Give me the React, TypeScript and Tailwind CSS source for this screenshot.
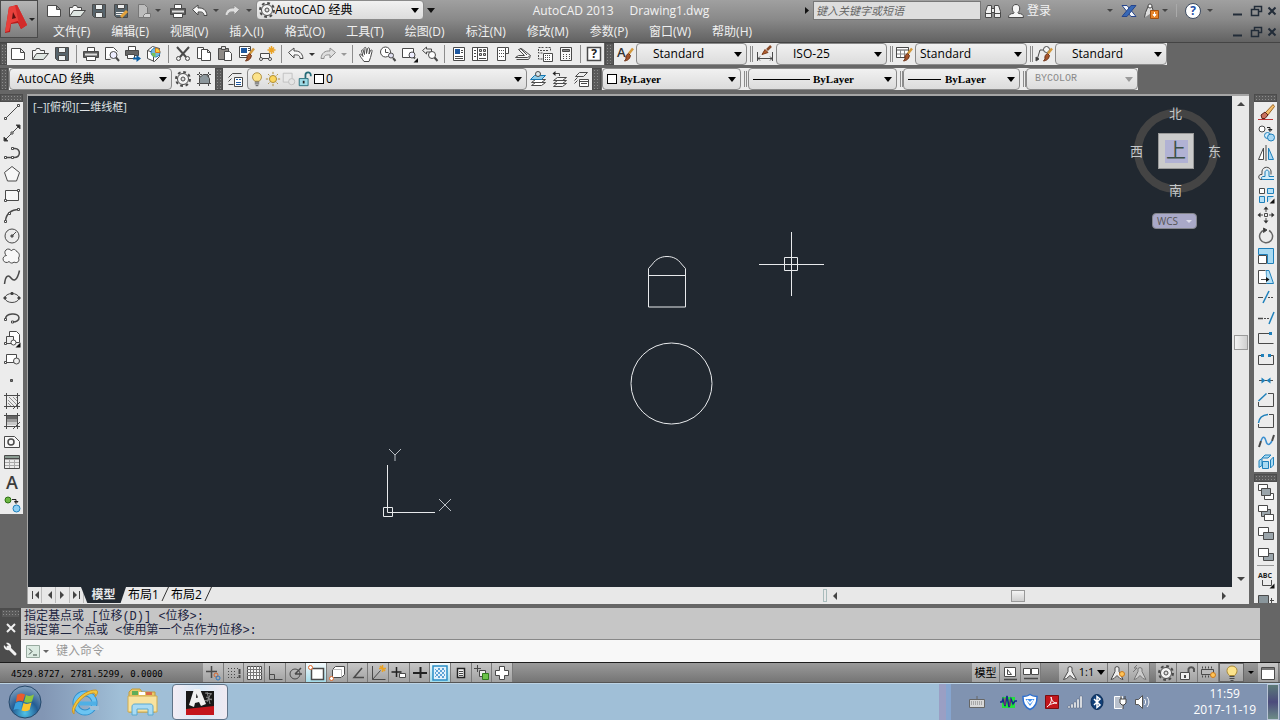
import React from "react";

type Kids = { children?: React.ReactNode };

// Base for all the 18px line icons
const Ico = ({ children, size = 18 }: Kids & { size?: number }) => (
  <svg
    width={size}
    height={size}
    viewBox="0 0 18 18"
    fill="none"
    stroke="#4a4a4a"
    strokeWidth="1"
    className="shrink-0 overflow-visible"
    aria-hidden="true"
  >
    {children}
  </svg>
);

const Gear = () => (
  <>
    <circle cx="9" cy="9" r="7" strokeWidth="2" strokeDasharray="2.8 2.7" />
    <circle cx="9" cy="9" r="5.5" fill="#f4f4f4" />
    <circle cx="9" cy="9" r="2" fill="#ddd" />
  </>
);

const Brush = () => (
  <>
    <path d="M17 3.500l-4 5" stroke="#d39a3e" strokeWidth="2.500" />
    <path d="M12.500 8.500l2 2c-1 4-3 5-6 5.500l1.500-2c-.5-3 .5-4.500 2.500-5.500z" fill="#a5542c" stroke="#6d3216" />
  </>
);

const Bulb = () => (
  <>
    <path d="M6.500 11.500C4.500 9.500 4 8.500 4 6.500a5 4.500 0 0110 0c0 2-.5 3-2.500 5z" fill="#fce38b" stroke="#a9893a" />
    <path d="M6.500 12.500h5M6.500 14.500h5M7.500 16.500h3" />
  </>
);

const Stack = () => <path d="M2.500 13.500l4-3h9l-4 3zM2.500 10.500l4-3h9l-4 3zM2.500 16.500l4-3h9l-4 3z" fill="#f5f5f5" />;

const icons: Record<string, React.ReactNode> = {
  new: <path d="M2.500 3.500h9l4 4v7h-13zM11.500 3.500v4h4" fill="#fff" />,
  open: (
    <>
      <path d="M1.500 14.500v-9h3l1-2h3l1 2h4v3" fill="#f5f5f5" />
      <path d="M1.500 14.500l4-6h12l-5 6z" fill="#dfe6e2" />
    </>
  ),
  save: (
    <>
      <path d="M2.500 2.500h13v13h-11l-2-2z" fill="#56646c" />
      <path d="M5.500 2.500h7v5h-7zM5.500 10.500h7v5h-7z" fill="#eef2f2" />
    </>
  ),
  saveAs: (
    <>
      <path d="M2.500 2.500h13v13h-11l-2-2z" fill="#56646c" />
      <path d="M5.500 2.500h7v4h-7z" fill="#eee" />
      <path d="M4 10.500h8M4 12.500h6" stroke="#eee" />
      <path d="M9 15l6-6" stroke="#e2a23c" strokeWidth="3" />
    </>
  ),
  sheetOff: (
    <>
      <path d="M3.500 2.500h6l3 3v10h-9z" fill="#bcbcbc" stroke="#777" />
      <path d="M10.500 11.500h5v4h-7v-2z" fill="#d0d0d0" stroke="#777" />
    </>
  ),
  print: (
    <>
      <path d="M5.500 6.500v-4h7v4" fill="#fff" />
      <path d="M1.500 6.500h15v6h-15z" fill="#5b5b5b" />
      <path d="M3 9.500h12" stroke="#ddd" strokeWidth="2" />
      <path d="M4.500 11.500h9v4h-9z" fill="#fff" />
    </>
  ),
  preview: (
    <>
      <path d="M2.500 14.500v-12h8l4 4M2.500 14.500h5" fill="#fff" />
      <circle cx="10.500" cy="10" r="3.500" fill="#eef" />
      <path d="M13 12.500l3 3.500" strokeWidth="2" />
    </>
  ),
  publish: (
    <>
      <path d="M4.500 5.500v-4h7v4" fill="#fff" />
      <path d="M1.500 5.500h13v5h-13z" fill="#666" />
      <path d="M3.500 9.500h7v4h-7z" fill="#fff" />
      <path d="M9 13.500h5" stroke="#0b5fa5" strokeWidth="2" />
      <path d="M12.500 10l4.500 3.500-4.500 3.500z" stroke="none" fill="#0b5fa5" />
    </>
  ),
  dwf: (
    <>
      <path d="M2.500 5.500l5-4 7 2v8l-5 5-7-3z" fill="#fff" />
      <path d="M2.500 5.500l6 2v9M8.500 7.500l6-4" />
      <circle cx="10.500" cy="7.500" r="4.500" fill="#74b9e0" stroke="#2a7fb8" />
      <path d="M10.500 3v4.500h4.500a4.500 4.500 0 00-4.500-4.500z" fill="#f4d13c" stroke="#d97a20" />
      <path d="M6.500 8h4v4a4 4 0 01-4-4z" fill="#7ac25a" stroke="none" />
    </>
  ),
  cut: (
    <>
      <path d="M3 2l9 10M15 2L6 12" strokeWidth="2" />
      <circle cx="4.500" cy="13.500" r="2" />
      <circle cx="13.500" cy="13.500" r="2" />
    </>
  ),
  copy: (
    <>
      <path d="M2.500 2.500h6v11h-6z" fill="#fff" />
      <path d="M6.500 4.500h6l3 3v8h-9zM12.500 4.500v3h3" fill="#fff" />
    </>
  ),
  paste: (
    <>
      <path d="M2.500 3.500h10v11h-10z" fill="#8e8a86" />
      <path d="M5.500 1.500h4v3h-4z" fill="#ddd" />
      <path d="M8.500 6.500h5l2 2v7h-7z" fill="#fff" />
    </>
  ),
  match: (
    <>
      <path d="M2.500 1.500h11v11h-11z" fill="#fff" />
      <path d="M4 3h6v5H4z" fill="#1c57a0" stroke="none" />
      <path d="M11 3.500h2M11 5.500h2M4 10.500h6" />
      <Brush />
    </>
  ),
  block: (
    <>
      <path d="M2.500 8.500h9v5h-9z" fill="#f4f4f4" />
      <circle cx="3" cy="14" r="1.500" fill="#fff" />
      <circle cx="12" cy="14" r="1.500" fill="#fff" />
      <path d="M13.500 1v8M9.500 5h8M11 2.500l5 5M16 2.500l-5 5" stroke="#eaa224" strokeWidth="1.500" />
    </>
  ),
  undo: <path d="M1.500 7.500l5.500-4.500v3c5-.5 8.500 2 9 7.500h-3c0-3-2-4-6-3.500v3z" fill="#f6f6f6" />,
  redo: <path d="M16.500 7.500l-5.500-4.500v3c-5-.5-8.500 2-9 7.500h3c0-3 2-4 6-3.500v3z" fill="#dedede" stroke="#8e8e8e" />,
  pan: (
    <path
      d="M6 16.500c-2-3-4-5-4.500-7 1-1 2 0 3.500 2l-1.500-6c.5-1 1.500-1 2 .5l1 3.500-.5-6c.5-1.500 2-1.500 2 0l.5 5 1-5c.5-1 2-1 2 .5l-.5 5 1.500-3.500c1-1 2-.5 1.500 1l-1.500 6-1.500 4z"
      fill="#fff"
    />
  ),
  zoomRt: (
    <>
      <circle cx="6.500" cy="7" r="5" fill="#fff" />
      <path d="M6.500 4v3.500h3" />
      <circle cx="12" cy="10.500" r="2.500" fill="#dde" />
      <path d="M14 13l2.500 3" strokeWidth="2" />
    </>
  ),
  zoomWin: (
    <>
      <path d="M2.500 3.500h11v9h-11z" fill="#fff" />
      <circle cx="12" cy="10" r="3" fill="#eef" />
      <path d="M14 12.500l1 1" strokeWidth="2" />
      <path d="M18 13v4.500h-4.500z" fill="#111" stroke="none" />
    </>
  ),
  zoomPrev: (
    <>
      <path d="M1.500 5.500l4-3.500v2h5v3h-5v2z" fill="#eee" />
      <circle cx="11" cy="10" r="3.500" fill="#fff" />
      <path d="M13.500 12.500l3 3.500" strokeWidth="2" />
    </>
  ),
  props: (
    <>
      <path d="M3.500 2.500h11v13h-11z" fill="#fff" />
      <path d="M5 4h5v5H5z" fill="#1c57a0" stroke="none" />
      <path d="M11 5.500h2M11 7.500h2M5 11.500h8M5 13.500h8" />
    </>
  ),
  design: (
    <>
      <path d="M1.500 2.500h15v13h-15zM6.500 2.500v13" fill="#fff" />
      <path d="M3 5.500h2M3 8.500h2M3 11.500h2" />
      <path d="M8.500 4.500h2v2h-2zM12.500 4.500h2v2h-2zM8.500 8.500h2v2h-2zM12.500 8.500h2v2h-2z" fill="#ccc" />
      <path d="M8 13.500h7" />
    </>
  ),
  palette: (
    <>
      <path d="M4.500 2.500h8v13h-8zM12.500 2.500h3v6h-3" fill="#fff" />
      <path d="M6 5.500h5M6 8.500h5M6 11.500h5" strokeDasharray="1 1" />
    </>
  ),
  sheets: (
    <>
      <path d="M1.500 12.500h12l3-2-9-7-3 1 6 6h-6z" fill="#f4f4f4" />
      <path d="M2.500 14.500h12l2-3M6 3l7 7" />
    </>
  ),
  markup: (
    <>
      <path d="M2.500 2.500h5M9.500 2.500h5v3M2.500 4v4h5M4 5.500h8M2.500 10v4h4" strokeDasharray="2 1" />
      <path d="M7.500 8.500h9v8h-9z" fill="#fff" />
      <path d="M9 10.500h6M9 12.500h6M9 14.500h6" strokeDasharray="1 1" />
    </>
  ),
  calc: (
    <>
      <path d="M3.500 2.500h11v13h-11z" fill="#f8f8f8" />
      <path d="M5.500 4.500h7v2h-7z" fill="#888" />
      <path d="M6 9.500h7M6 11.500h7M6 13.500h7" strokeDasharray="1 2" />
    </>
  ),
  help: (
    <>
      <path d="M2.500 2.500h13v13h-13z" fill="#fff" strokeWidth="1.500" />
      <text x="9" y="13" textAnchor="middle" fontSize="12" fontWeight="bold" fill="#222" stroke="none">?</text>
    </>
  ),
  textStyle: (
    <>
      <text x="1" y="12" fontSize="13" fontWeight="600" fill="#333" stroke="none">A</text>
      <Brush />
    </>
  ),
  dimStyle: (
    <>
      <path d="M1.500 7v9M16.500 7v9M1.500 13.500h15M4 11.500l-2 2 2 2M14 11.500l2 2-2 2" />
      <path d="M15 1l-4 4" stroke="#8a4b2a" strokeWidth="2.500" />
      <path d="M6 9.500l3-5 3 3z" fill="#b5602f" stroke="#7d3b19" />
    </>
  ),
  tableStyle: (
    <>
      <path d="M1.500 2.500h12v10h-12zM5.500 5.500v7M9.500 5.500v7M1.500 9h12" fill="#fff" stroke="#888" />
      <path d="M1.500 2.500h12v10h-12zM1.500 5h12" />
      <Brush />
    </>
  ),
  leaderStyle: (
    <>
      <path d="M2 15l3-10h4" />
      <path d="M1 12v4l3-2z" fill="#333" />
      <circle cx="11.500" cy="4.500" r="3" fill="#f5f5f5" />
      <Brush />
    </>
  ),
  gear: <Gear />,
  workspace: (
    <>
      <path d="M2 4.500h14M2 13.500h14M4.500 2v14M13.500 2v14" strokeDasharray="2 1" />
      <path d="M4.500 13.500v-6l4-3h3l3 4v5z" fill="#8d979c" />
    </>
  ),
  layerProps: (
    <>
      <path d="M2.500 7.500l4-4h9M2.500 11.500l3-3M2.500 14.500h5" />
      <path d="M8.500 7.500h8v9h-8z" fill="#fff" />
      <path d="M10 9.500h2M13 9.500h2M10 12.500h5M10 14.500h5" stroke="#1c57a0" />
    </>
  ),
  bulb: <Bulb />,
  sun: (
    <>
      <circle cx="9" cy="9" r="4" fill="#fbd65e" stroke="#a7842a" />
      <path d="M9 1v2.500M9 14.500v2.500M1 9h2.500M14.500 9h2.500M3.500 3.500l1.500 1.500M13 13l1.500 1.500M14.500 3.500L13 5M5 13l-1.500 1.500" stroke="#a7842a" />
    </>
  ),
  vpFreeze: (
    <>
      <path d="M2.500 2.500h10v10h-10z" fill="#e9e9e9" stroke="#bdbdbd" />
      <circle cx="12" cy="12" r="3.500" fill="#e4e4e4" stroke="#bdbdbd" />
    </>
  ),
  unlock: (
    <>
      <path d="M9.500 8V4.500a3 3 0 016 0V6" stroke="#246a78" strokeWidth="2" />
      <path d="M2.500 8.500h10v8h-10z" fill="#9edbe6" stroke="#246a78" />
      <path d="M7.500 11v3" stroke="#222" strokeWidth="2" />
    </>
  ),
  layerCurrent: (
    <>
      <path d="M2.500 12.500l4-3h10l-4 3zM2.500 15.500l4-3h10l-4 3z" fill="#fff" />
      <path d="M1.500 9.500l4-4h11l-4 4z" fill="#8fcdea" stroke="#1276b2" />
      <circle cx="9" cy="4" r="2.500" fill="#dbe8ec" />
    </>
  ),
  layerPrev: (
    <>
      <Stack />
      <path d="M3 3.500h5.500V6" />
      <path d="M4.500 1L1.500 3.500l3 2.500z" fill="#222" stroke="none" />
    </>
  ),
  layerState: (
    <>
      <path d="M3.500 6.500l4-4h8l-4 4zM2.500 10.500l3-3M2.500 13.500l3-3" fill="#eee" />
      <path d="M7.500 9.500h9v7h-9z" fill="#fff" />
      <path d="M7.500 11.500h9M9 13.500h6" />
    </>
  ),
  // draw
  line: (
    <>
      <path d="M3 15L15 3" />
      <path d="M1.500 14.500h2v2h-2zM14.500 1.500h2v2h-2z" fill="#fff" />
    </>
  ),
  xline: (
    <>
      <path d="M3 15L15 3" />
      <path d="M1 17v-4l4 4zM17 1v4l-4-4z" fill="#222" />
      <path d="M8 8h2v2h-2z" fill="#fff" />
    </>
  ),
  pline: (
    <>
      <path d="M2 13.500h9c7 0 7-9 1-9h-2" strokeWidth="1.500" />
      <path d="M1.500 12.500h2v2h-2zM8.500 12.500h2v2h-2zM8.500 3.500h2v2h-2z" fill="#fff" />
    </>
  ),
  polygon: <path d="M9 1.500l7.500 6-3 8.500h-9l-3-8.500z" fill="#f8f8f8" />,
  rect: (
    <>
      <path d="M2.500 4.500h13v10h-13z" fill="#f8f8f8" />
      <path d="M1.500 13.500h2v2h-2zM14.500 3.500h2v2h-2z" fill="#fff" />
    </>
  ),
  arc: (
    <>
      <path d="M2.500 15C3 8 8 3.500 16 3.500" strokeWidth="1.500" />
      <path d="M1.500 14.500h2v2h-2zM5.500 6.500h2v2h-2zM14.500 2.500h2v2h-2z" fill="#fff" />
    </>
  ),
  circle: (
    <>
      <circle cx="9" cy="9" r="7" />
      <path d="M9 9l4-4M8 8h2v2h-2z" fill="#777" />
    </>
  ),
  cloud: <path d="M8.500 4a3.500 3.500 0 10-5 4.500 3.500 3.500 0 102.500 6c1.500 2 4 2 5 .5 3 2 6-1 4.500-4 2-3 0-6-2-6.500-1-3-4.500-2.500-5-.500z" fill="#f8f8f8" />,
  spline: <path d="M1.500 16c1-9 4-9.500 6.500-6s6 3.500 8.500-7.500" strokeWidth="1.500" />,
  ellipse: (
    <>
      <ellipse cx="9" cy="9" rx="7" ry="4.500" />
      <path d="M1 8h2v2h-2zM15 8h2v2h-2zM8 3.500h2v2h-2z" fill="#333" />
    </>
  ),
  ellipseArc: (
    <>
      <path d="M2.500 10c0-6 13-7 13.500-1.500.3 3-3 4.500-6 4.500" strokeWidth="1.500" />
      <path d="M1.500 9.500h2v2h-2zM8.500 12h2v2h-2z" fill="#fff" />
    </>
  ),
  insert: (
    <>
      <path d="M6.500 1.500h7l3 3v8h-10z" fill="#fff" />
      <path d="M3.500 6.500h7v7h-7z" fill="#eee" />
      <circle cx="10.500" cy="12.500" r="2.500" fill="#fff" />
      <path d="M1.500 12.500h2v2h-2z" fill="#fff" />
      <path d="M17.500 12.500v5h-5z" fill="#111" stroke="none" />
    </>
  ),
  makeBlock: (
    <>
      <path d="M3.500 4.500h10v8h-10z" fill="#fff" />
      <circle cx="13.500" cy="11" r="3" fill="#eee" />
      <path d="M1.500 11.500h2v2h-2z" fill="#fff" />
    </>
  ),
  point: <path d="M7.500 8.500h2v2h-2z" fill="#777" />,
  hatch: (
    <>
      <path d="M5 8l6 6M5 11l3 3M6 5l8 8M10 5l4 4M13 5l1 1" stroke="#909090" />
      <path d="M1 3.500h16M1 14.500h16M3.500 1v16M14.500 1v16M17 10l-7 7" />
    </>
  ),
  gradient: (
    <>
      <path d="M4 4h10v3H4z" fill="#666" stroke="none" />
      <path d="M4 7h10v3H4z" fill="#999" stroke="none" />
      <path d="M4 10h10v3H4z" fill="#c8c8c8" stroke="none" />
      <path d="M1 3.500h16M1 14.500h16M3.500 1v16M14.500 1v16M17 10l-7 7" />
    </>
  ),
  region: (
    <>
      <path d="M1.500 3.500h10l5 5v6h-15z" fill="#f8f8f8" />
      <circle cx="8" cy="9" r="3" strokeWidth="1.500" />
    </>
  ),
  table: (
    <>
      <path d="M2 6.500h14M2 9.500h14M2 12.500h14M6.500 6v9M11.500 6v9" stroke="#aaa" />
      <path d="M2 3h14v2H2z" fill="#8b9c92" stroke="none" />
      <path d="M1.500 2.500h15v13h-15zM1.500 5.500h15" />
    </>
  ),
  mtext: <text x="9" y="15" textAnchor="middle" fontSize="18" fontWeight="600" fill="#3c3c3c" stroke="none">A</text>,
  addSel: (
    <>
      <circle cx="5" cy="5" r="3" fill="#6db742" stroke="#2f7216" />
      <circle cx="13.500" cy="13.500" r="3.500" fill="#8fd0f4" stroke="#1f80bb" />
      <path d="M9 4.500h4v3M11.500 6.500l1.500 2 2-2z" stroke="#222" fill="none" />
    </>
  ),
  // modify
  erase: (
    <>
      <path d="M1 16.500h15" stroke="#b33" />
      <path d="M8 10l8-8.500 1.500 2-7 9z" fill="#f4bd6c" stroke="#9a6520" />
      <path d="M4 12l4-3 3 3-3 3.500H5z" fill="#c9705c" stroke="#5c2218" />
    </>
  ),
  copyObj: (
    <>
      <circle cx="5" cy="5" r="3" fill="#fff" />
      <path d="M10 3.500h3v3M11.500 5.500l1.500 2 2-2z" stroke="#222" />
      <circle cx="10.500" cy="11.500" r="3" fill="#d5ecfa" stroke="#1f80bb" />
      <circle cx="14" cy="13.500" r="3.500" fill="#a9d8f4" stroke="#1f80bb" />
    </>
  ),
  mirror: (
    <>
      <path d="M6.500 4v11.500h-5z" fill="#fff" />
      <path d="M9 1v16" />
      <path d="M11.500 4v11.500h5z" fill="#a9d8f4" stroke="#1f80bb" />
    </>
  ),
  offset: (
    <>
      <path d="M5 9.500V6c1-5 8-5 9 0v3.500M5 9.500H4c-3 0-3 5 0 5h2" />
      <path d="M17 14.500H6c-2 0-2-3 0-3h2V7c.5-2.500 3.500-2.500 4 0v4.500h5" fill="#d4edf9" stroke="#1f80bb" />
    </>
  ),
  array: (
    <>
      <path d="M2.500 2.500h5v5h-5z" fill="#fff" />
      <path d="M10.500 2.500h6v5h-6zM2.500 10.500h5v6h-5zM10.500 16v-5.500h6" fill="#b8e0f5" stroke="#1f80bb" />
      <path d="M17.500 12.500v5h-5z" fill="#111" stroke="none" />
    </>
  ),
  move: (
    <>
      <path d="M9 2v4M9 12v4M2 9h4M12 9h4M7.500 7.500h3v3h-3z" />
      <path d="M9 .5l2.500 3h-5zM9 17.500l2.500-3h-5zM.5 9l3-2.500v5zM17.500 9l-3-2.500v5z" fill="#333" stroke="none" />
    </>
  ),
  rotate: (
    <>
      <path d="M7.500 3A6.500 6.500 0 1012 3.500" stroke="#666" strokeWidth="1.500" />
      <path d="M6.500 1l3.500 2-3.500 2.500z" fill="#333" />
    </>
  ),
  scale: (
    <>
      <path d="M1.500 1.500h15v15h-6v-9h-9z" fill="#a9daf2" stroke="#1f80bb" />
      <path d="M1.500 8.500h8v8h-8z" fill="#fff" />
    </>
  ),
  stretch: (
    <>
      <path d="M9 2.500h3l4.500 13H9z" fill="#b8e0f5" stroke="#1f80bb" />
      <path d="M8.500 2.500h-7v13h8" fill="#fff" />
      <path d="M4 11.500h6" />
      <path d="M9 9l3.500 2.500L9 14z" fill="#111" stroke="none" />
    </>
  ),
  trim: (
    <>
      <path d="M1 9.500h5" />
      <path d="M11 9.500h6" strokeDasharray="2 1" />
      <path d="M12 3L6 15" stroke="#1f80bb" strokeWidth="1.500" />
    </>
  ),
  extend: (
    <>
      <path d="M1 9.500h5" strokeWidth="1.500" />
      <path d="M7 9.500h5" strokeDasharray="2 1" />
      <path d="M17 3l-5 12" stroke="#1f80bb" strokeWidth="1.500" />
    </>
  ),
  breakPt: (
    <>
      <path d="M12 4.500H1.500v10h15" />
      <path d="M12 3h3v3h-3z" fill="#1f80bb" stroke="none" />
    </>
  ),
  breakObj: (
    <>
      <path d="M4 5.500H1.500v9h15v-9H14" />
      <path d="M4 4h3v3H4zM11 4h3v3h-3z" fill="#1f80bb" stroke="none" />
    </>
  ),
  join: (
    <>
      <path d="M2 9.500h14" />
      <path d="M4.500 6.500l4 3-4 3zM13.500 6.500l-4 3 4 3z" fill="#1f80bb" stroke="none" />
    </>
  ),
  chamfer: (
    <>
      <path d="M11 2.500h5.500v13h-15V11" />
      <path d="M1.500 10l8-7.500" stroke="#1f80bb" strokeWidth="1.500" />
    </>
  ),
  fillet: (
    <>
      <path d="M12 2.500h4.500v13h-15V12" />
      <path d="M1.500 11C2 6 6 3 11 2.500" stroke="#1f80bb" strokeWidth="1.500" />
    </>
  ),
  blend: (
    <>
      <path d="M2 15l2-6M17 3l-2 6" strokeWidth="2" />
      <path d="M4 9c2-6 4-4 5 0s3 5 6 0" stroke="#3b8fd0" strokeWidth="1.500" />
    </>
  ),
  explode: (
    <path
      d="M5.500 8.500h6v7h-6zM2 7.500l3-2v7l-3 2zM5 5l3-3h6l-3 3zM13.500 7l3-3v8l-3 3z"
      fill="#a9daf2"
      stroke="#1f80bb"
    />
  ),
  orderFront: (
    <>
      <path d="M1.500 1.500h9v6h-9zM7.500 10.500h9v6h-9z" fill="#fff" />
      <path d="M4.500 5.500h9v7h-9z" fill="#9ba5ab" />
    </>
  ),
  orderBack: (
    <>
      <path d="M4.500 5.500h9v7h-9z" fill="#9ba5ab" />
      <path d="M1.500 1.500h9v6h-9zM7.500 10.500h9v6h-9z" fill="#fff" />
    </>
  ),
  orderAbove: (
    <>
      <path d="M1.500 2.500h10v8h-10z" fill="#fff" />
      <path d="M6.500 7.500h10v7h-10z" fill="#9ba5ab" />
    </>
  ),
  orderUnder: (
    <>
      <path d="M6.500 7.500h10v7h-10z" fill="#9ba5ab" />
      <path d="M1.500 2.500h10v8h-10z" fill="#fff" />
    </>
  ),
  orderText: (
    <>
      <text x="1" y="7" fontSize="7" fontWeight="bold" fill="#222" stroke="none">ABC</text>
      <path d="M5.500 9v5.500h9V9" />
      <path d="M17.500 12.500v5h-5z" fill="#111" stroke="none" />
    </>
  ),
  orderHatch: (
    <>
      <path d="M1.500 3.500h10v10h-10z" fill="#8a969c" />
      <path d="M14.500 6v6M13 8.500h4M14.500 12.500h2" />
    </>
  ),
  // status bar toggles
  infer: (
    <>
      <path d="M7.500 2v12M2 7.500h11" strokeWidth="1.500" />
      <circle cx="12" cy="11" r="2" stroke="#d9672c" />
      <circle cx="14" cy="14" r="2" stroke="#2b78c2" />
    </>
  ),
  snap: (
    <>
      <path d="M3 4.500h10M3 7.500h8M3 10.500h8M3 13.500h10" strokeDasharray="1 2" />
      <path d="M14.500 5v9" strokeWidth="2" strokeDasharray="5 1" />
    </>
  ),
  grid: (
    <>
      <path d="M2.500 2.500h14v13h-14z" fill="#f6f6f6" />
      <path d="M5.500 2v14M8.500 2v14M11.500 2v14M14.500 2v14M2 5.500h15M2 8.500h15M2 11.500h15" stroke="#777" />
    </>
  ),
  ortho: <path d="M3.500 2v13.500h13M3.500 10.500h5v5" />,
  polar: (
    <>
      <circle cx="8" cy="10" r="5" />
      <path d="M8 10l6-6M8 10h7" strokeWidth="1.500" />
    </>
  ),
  osnap: (
    <>
      <path d="M4.500 4.500h12v11h-12z" fill="#fff" strokeWidth="1.500" />
      <circle cx="3.500" cy="3.500" r="2" fill="#fff" stroke="#e26a2c" />
    </>
  ),
  osnap3d: (
    <>
      <path d="M4.500 5.500l3-3h9v8l-3 3h-9z" fill="#fff" />
      <path d="M4.500 5.500h9v8" stroke="#bbb" />
      <circle cx="3.500" cy="14.500" r="2" fill="#fff" stroke="#e26a2c" />
    </>
  ),
  otrack: <path d="M13 4L5 13.500h10" strokeWidth="1.500" />,
  ducs: (
    <>
      <path d="M3.500 2v13.500h13M3.500 15.500l8-9" />
      <path d="M13.500 1v7M10 4.500h7M11 2l5 5" stroke="#eaa224" strokeWidth="1.500" />
    </>
  ),
  dyn: (
    <>
      <path d="M6.500 3v10M1.500 8h10" strokeWidth="1.500" stroke="#222" />
      <path d="M9.500 9.500h6v4h-6z" fill="#fff" />
    </>
  ),
  lwt: <path d="M2 9h14M9.500 3v11" strokeWidth="2" stroke="#222" />,
  tpy: (
    <>
      <path d="M2 2h14v14H2z" fill="#e3f2fb" stroke="#2a8fc6" strokeWidth="1.500" />
      <path d="M4 5l9 9M4 9l5 5M7 4l7 7M11 4l3 3M4 13L13 4M4 9l5-5M7 14l7-7M11 14l3-3" stroke="#5ea3d6" />
    </>
  ),
  qp: (
    <>
      <path d="M5.500 4.500h7v9h-7z" fill="#f5f5f5" strokeWidth="1.500" stroke="#222" />
      <path d="M7 7.500h4M7 9.500h4M7 11.500h4" />
    </>
  ),
  sc: (
    <>
      <path d="M4.500 1v7M1 4.500h7" />
      <path d="M6.500 6.500h6v6h-6z" fill="#eee" />
      <path d="M9.500 9.500h6v6h-6z" fill="#6cc24a" stroke="#2f7a1c" />
    </>
  ),
  am: <path d="M6.500 2.500h5v4h4v5h-4v4h-5v-4h-4v-5h4z" fill="#fff" />,
  paper: (
    <>
      <path d="M3.500 3.500h11v9h-11z" fill="#fff" />
      <path d="M6.500 5.500v5h4z" />
      <path d="M3 15.500h13" strokeWidth="1.500" />
    </>
  ),
  layouts: (
    <>
      <path d="M1.500 4.500h7v6h-7zM9.500 4.500h7v6h-7z" fill="#fff" />
      <path d="M2 14.500h14" strokeWidth="1.500" />
    </>
  ),
  annotate: <path d="M9 2.500l2 1v4l4.500 8-3-1-3.500-3-3.500 3-3 1 4.500-8v-4z" fill="#eee" />,
  annoVis: (
    <>
      <path d="M8 2.500l2 1v4l4 8-3-1-3-3-3 3-3 1 4-8v-4z" fill="#eee" />
      <circle cx="13" cy="10" r="2.500" fill="#ffc457" stroke="#cc7a1c" />
    </>
  ),
  annoAuto: (
    <>
      <path d="M10 3.500l2 1v3l4 8-3-1-3-3-3 3-3 1 4-8v-3z" fill="#ccc" stroke="#777" />
      <path d="M3 8l4-4H4l3-3" stroke="#777" />
    </>
  ),
  lockOpen: (
    <>
      <path d="M10.500 8V5a3 3 0 015.500 0v3" strokeWidth="2" stroke="#555" />
      <path d="M2.500 8.500h9v7h-9z" fill="#eee" />
      <path d="M7 11v3" strokeWidth="2" />
    </>
  ),
  hardware: (
    <>
      <path d="M2.500 5.500h12v5h-12z" fill="#bbb" />
      <path d="M3 3.500h12M3 12.500h8" strokeDasharray="1 2" strokeWidth="2" />
      <circle cx="14" cy="11" r="2.500" fill="#ffc457" stroke="#cc7a1c" />
    </>
  ),
  clean: (
    <>
      <path d="M2.500 3.500h13v12h-13z" fill="#fff" />
      <path d="M3 5h12" strokeWidth="2" stroke="#777" />
    </>
  ),
  // title bar
  binoculars: (
    <path
      d="M1.500 15.500v-6l2-6h4v12zM16.500 15.500v-6l-2-6h-4v12zM7.500 6.500h3v4h-3M1.500 11.500h6M10.500 11.500h6"
      fill="#efefef"
    />
  ),
  user: (
    <path d="M1.500 15.500c0-3 2-4 5-4l.5-1c-2.500-2-2.500-8 2-8s4.500 6 2 8l.5 1c3 0 5 1 5 4z" fill="#f4f4f4" />
  ),
  exchange: (
    <>
      <path d="M2 3.500h5l9 11h-5z" fill="#f2f5fa" stroke="#26458c" />
      <path d="M16 3.500h-5L2 14.500h5z" fill="#3768b5" stroke="#26458c" />
    </>
  ),
  a360: (
    <>
      <path d="M2.500 15.500l1-5 3-7h3l2 6" fill="#ddd" />
      <circle cx="8" cy="4" r="2" fill="#fff" />
      <path d="M8.500 8.500h8v8h-8z" fill="#e8852a" stroke="#a1500f" />
      <path d="M12.500 10v3M11 12.500l1.500 2 1.500-2z" stroke="#fff" fill="#fff" />
    </>
  ),
  helpRound: (
    <>
      <circle cx="9" cy="9" r="7.500" fill="#fff" stroke="#3c4a60" />
      <text x="9" y="13" textAnchor="middle" fontSize="12" fontWeight="bold" fill="#1f4fa8" stroke="none">?</text>
    </>
  ),
};

const IconButton = ({ name, className = "" }: { name: string; className?: string }) => (
  <button aria-label={name} className={`flex items-center justify-center min-w-0 ${className}`}>
    <Ico>{icons[name]}</Ico>
  </button>
);

const Caret = ({ className = "" }: { className?: string }) => (
  <svg width="8" height="5" viewBox="0 0 8 5" className={`shrink-0 ${className}`} aria-hidden="true">
    <path d="M0 0h8L4 5z" fill="currentColor" />
  </svg>
);

const SmallCaret = ({ className = "" }: { className?: string }) => (
  <svg width="6" height="3" viewBox="0 0 6 3" className={`shrink-0 ${className}`} aria-hidden="true">
    <path d="M0 0h6L3 3z" fill="currentColor" />
  </svg>
);

const Sep = () => (
  <span className="flex w-[7px] shrink-0 justify-center">
    <span className="my-[2px] w-px bg-[#8c8c8c]" />
  </span>
);

// Dotted drag handle of a toolbar
const Grip = ({ className = "" }: { className?: string }) => (
  <div
    className={`shrink-0 border border-[#4c4c4c] bg-[#5a5a5a] bg-[radial-gradient(#8c8c8c_1px,transparent_1px)] bg-[size:3px_3px] ${className}`}
  />
);

// A run of icon buttons that share a width
const IconRun = ({ names, className }: { names: string[]; className: string }) => (
  <div className={`flex shrink-0 ${className}`}>
    {names.map((name) => (
      <IconButton key={name} name={name} className="flex-1" />
    ))}
  </div>
);

type DropProps = Kids & {
  label: string;
  value: string;
  className: string;
  textClass: string;
  disabled?: boolean;
};

const Drop = ({ label, value, className, textClass, disabled, children }: DropProps) => (
  <div
    className={`relative flex shrink-0 items-center rounded-sm border border-[#8a8a8a] bg-linear-to-b from-[#f1f1f1] to-[#dcdcdc] ${className}`}
  >
    <select
      aria-label={label}
      disabled={disabled}
      className={`w-full appearance-none truncate ${disabled ? "text-[#8a8a8a] opacity-100" : "text-black"} ${textClass}`}
    >
      <option>{value}</option>
    </select>
    {children && <span className="pointer-events-none absolute inset-y-0 left-1 flex items-center">{children}</span>}
    <Caret
      className={`pointer-events-none absolute top-1/2 right-1 -mt-[2px] ${disabled ? "text-[#9a9a9a]" : "text-black"}`}
    />
  </div>
);

// Light strip with a double rule, sits between two drop-downs
const Joint = ({ icon, className }: { icon?: string; className: string }) => (
  <div className={`flex shrink-0 items-center bg-[#ececec] pl-[3px] ${className}`}>
    <span className="h-4 w-[3px] shrink-0 border-x border-[#8c8c8c]" />
    {icon && <IconButton name={icon} className="flex-1" />}
  </div>
);

const WindowButtons = () => (
  <div className="flex items-center gap-[2px] pr-[2px]">
    <button aria-label="最小化" className="w-4">
      <svg width="16" height="12" viewBox="0 0 16 12">
        <path d="M3 9.500h9" stroke="#222c38" strokeWidth="2" />
      </svg>
    </button>
    <button aria-label="还原" className="w-4">
      <svg width="16" height="12" viewBox="0 0 16 12" fill="none" stroke="#222c38">
        <path d="M6.500 4V1.500h7v5H11M3.500 4.500h7v6h-7z" strokeWidth="1.500" />
      </svg>
    </button>
    <button aria-label="关闭" className="w-3">
      <svg width="12" height="12" viewBox="0 0 12 12">
        <path d="M2.500 2.500l7 7M9.500 2.500l-7 7" stroke="#222c38" strokeWidth="2" />
      </svg>
    </button>
  </div>
);

const menus = [
  "文件(F)", "编辑(E)", "视图(V)", "插入(I)", "格式(O)", "工具(T)",
  "绘图(D)", "标注(N)", "修改(M)", "参数(P)", "窗口(W)", "帮助(H)",
];

const Header = () => (
  <header className="flex border-b border-[#444] bg-linear-to-b from-[#a0a0a0] from-0% via-[#8a8a8a] via-45% to-[#626262] to-100%">
    <button
      aria-label="应用程序菜单"
      className="flex h-[38px] w-[38px] shrink-0 items-center border border-[#4a4a4a] bg-linear-to-b from-[#b5b5b5] to-[#7e7e7e] pl-[2px]"
    >
      <svg width="26" height="30" viewBox="0 0 26 30" className="shrink-0" aria-hidden="true">
        <path d="M6 3l8-2 10 20-6 4-3-6-7 1-1 8-5 1z" fill="#b81a1a" />
        <path d="M6 3l8-2 10 20-6 2-3-6-7 2-2 8-4 1z" fill="#e8403b" />
        <path d="M12 1h2l10 20-6 4-2-5z" fill="#d22b2a" />
        <path d="M10 8l3 6-4 1z" fill="#5d1010" />
      </svg>
      <SmallCaret className="text-[#222]" />
    </button>
    <div className="min-w-0 flex-1">
      <div className="flex h-[21px] pl-[5px]">
        <IconRun names={["new", "open", "save", "saveAs", "sheetOff"]} className="w-[112px]" />
        <SmallCaret className="self-center text-[#444]" />
        <IconRun names={["print", "undo"]} className="ml-[6px] w-[44px]" />
        <SmallCaret className="mx-[2px] self-center text-[#444]" />
        <IconButton name="redo" className="w-[22px]" />
        <SmallCaret className="ml-[3px] mr-[4px] self-center text-[#444]" />
        <Drop label="工作空间" value="AutoCAD 经典" className="h-5 w-[168px]" textClass="pl-[18px] text-xs">
          <span className="-ml-[3px]">
            <Ico>{icons.gear}</Ico>
          </span>
        </Drop>
        <Caret className="ml-[3px] self-center text-[#111]" />
        <h1 className="flex flex-1 items-center justify-center gap-4 pl-1 text-xs text-[#f2f2f2]">
          <span>AutoCAD 2013</span>
          <span>Drawing1.dwg</span>
        </h1>
        <svg width="10" height="21" viewBox="0 0 10 21" className="shrink-0" aria-hidden="true">
          <path d="M2 7l4 3.500L2 14z" fill="#111" />
        </svg>
        <input
          aria-label="搜索"
          placeholder="键入关键字或短语"
          className="mt-px h-[19px] w-[168px] border border-[#777] bg-[#dedede] px-[2px] text-[11px] italic placeholder:text-[#666]"
        />
        <IconRun names={["binoculars", "user"]} className="w-[46px]" />
        <button className="w-[24px] text-xs leading-5 text-[#f2f2f2]">登录</button>
        <SmallCaret className="ml-[56px] mr-[5px] self-center text-[#444]" />
        <IconRun names={["exchange", "a360"]} className="w-[44px]" />
        <SmallCaret className="self-center text-[#444]" />
        <span className="mr-[5px] ml-[8px] my-1 w-px bg-[#aaa]" />
        <IconButton name="helpRound" className="w-[22px]" />
        <SmallCaret className="mr-[17px] ml-[3px] self-center text-[#444]" />
        <WindowButtons />
      </div>
      <div className="flex h-[21px] items-center justify-between pt-px">
        <nav className="flex gap-[21px] pl-[15px] text-xs text-[#f0f0f0]">
          {menus.map((menu) => (
            <button key={menu} className="whitespace-nowrap">
              {menu}
            </button>
          ))}
        </nav>
        <WindowButtons />
      </div>
    </div>
  </header>
);

const StandardBar = () => (
  <div className="flex h-[22px] text-xs">
    <Grip className="w-[7px]" />
    <div className="flex shrink-0 bg-[#ececec]">
      <IconRun names={["new", "open", "save"]} className="w-[66px]" />
      <Sep />
      <IconRun names={["print", "preview", "publish", "dwf"]} className="w-[85px]" />
      <Sep />
      <IconRun names={["cut", "copy", "paste", "match", "block"]} className="w-[106px]" />
      <Sep />
      <IconButton name="undo" className="w-[22px]" />
      <SmallCaret className="mx-[2px] self-center text-[#333]" />
      <IconButton name="redo" className="w-[22px]" />
      <SmallCaret className="mx-[2px] self-center text-[#999]" />
      <Sep />
      <IconRun names={["pan", "zoomRt", "zoomWin", "zoomPrev"]} className="w-[85px]" />
      <Sep />
      <IconRun names={["props", "design", "palette", "sheets", "markup", "calc"]} className="w-[129px]" />
      <Sep />
      <IconButton name="help" className="w-[20px]" />
    </div>
    <Grip className="ml-px w-[9px]" />
    <div className="flex bg-[#ececec]">
      <IconButton name="textStyle" className="w-[22px]" />
      <Drop label="文字样式" value="Standard" className="w-[111px]" textClass="pl-[16px]" />
      <Joint icon="dimStyle" className="w-[29px]" />
      <Drop label="标注样式" value="ISO-25" className="w-[111px]" textClass="pl-[16px]" />
      <Joint icon="tableStyle" className="w-[28px]" />
      <Drop label="表格样式" value="Standard" className="w-[112px]" textClass="pl-[4px]" />
      <Joint icon="leaderStyle" className="w-[28px]" />
      <Drop label="多重引线样式" value="Standard" className="w-[112px]" textClass="pl-[16px]" />
    </div>
  </div>
);

const PropertyBar = () => (
  <div className="mt-[3px] flex h-[22px] text-xs">
    <Grip className="w-[8px]" />
    <div className="ml-px flex bg-[#ececec]">
      <Drop label="工作空间设置" value="AutoCAD 经典" className="w-[163px]" textClass="pl-[7px]" />
      <IconRun names={["gear", "workspace"]} className="w-[43px]" />
    </div>
    <Grip className="w-[8px]" />
    <div className="flex bg-[#ececec]">
      <IconButton name="layerProps" className="w-[24px]" />
      <Drop label="图层" value="0" className="w-[280px]" textClass="pl-[78px]">
        <span className="-ml-[3px] flex items-center">
          {["bulb", "sun", "vpFreeze", "unlock"].map((name) => (
            <Ico key={name} size={16}>
              {icons[name]}
            </Ico>
          ))}
          <span className="ml-px h-[10px] w-[10px] border border-black bg-white" />
        </span>
      </Drop>
      <IconRun names={["layerCurrent", "layerPrev", "layerState"]} className="w-[65px]" />
    </div>
    <Grip className="w-[9px]" />
    <div className="ml-px flex bg-[#ececec]">
      <Drop
        label="颜色"
        value="ByLayer"
        className="w-[139px]"
        textClass="pl-[17px] font-['Liberation_Serif',serif] text-[11px] font-bold"
      >
        <span className="h-[10px] w-[10px] border border-black bg-white" />
      </Drop>
      <Joint className="w-[7px]" />
      <Drop
        label="线型"
        value="ByLayer"
        className="w-[149px]"
        textClass="pl-[64px] font-['Liberation_Serif',serif] text-[11px] font-bold"
      >
        <span className="h-px w-[57px] bg-black" />
      </Drop>
      <Joint className="w-[6px]" />
      <Drop
        label="线宽"
        value="ByLayer"
        className="w-[117px]"
        textClass="pl-[41px] font-['Liberation_Serif',serif] text-[11px] font-bold"
      >
        <span className="h-px w-[33px] bg-black" />
      </Drop>
      <Joint className="w-[6px]" />
      <Drop
        label="打印样式"
        value="BYCOLOR"
        disabled
        className="w-[112px]"
        textClass="pl-[8px] font-['Liberation_Mono',monospace] text-[10px]"
      />
    </div>
  </div>
);

const drawTools = [
  "line", "xline", "pline", "polygon", "rect", "arc", "circle", "cloud", "spline", "ellipse",
  "ellipseArc", "insert", "makeBlock", "point", "hatch", "gradient", "region", "table", "mtext", "addSel",
];

const modifyTools = [
  "erase", "copyObj", "mirror", "offset", "array", "move", "rotate", "scale", "stretch",
  "trim", "extend", "breakPt", "breakObj", "join", "chamfer", "fillet", "blend", "explode",
];

const ToolColumn = ({ names, className }: { names: string[]; className: string }) => (
  <div className={`flex shrink-0 flex-col bg-[#ececec] ${className}`}>
    {names.map((name) => (
      <IconButton key={name} name={name} className="min-h-0 flex-1" />
    ))}
  </div>
);

const Drawing = () => (
  <svg className="absolute inset-0 h-full w-full" fill="none" stroke="#e8eaec" strokeWidth="1">
    <path d="M620.500 211V172.500L624.500 168C628 163 633 160.500 639 160.500S650 163 653.500 168L657.500 172.500V211zM620.500 179.500h37" />
    <circle cx="643.500" cy="287.500" r="40.500" />
    <path d="M731 168.500h65M763.500 136v64M756.500 161.500h13v13h-13z" />
    <path d="M359.500 369v47.500H407M355.500 411.500h9v9h-9z" />
    <path d="M361 353l6 6 6-6M367 359v6M411 403l12 12M423 403l-12 12" stroke="#b9bec3" />
  </svg>
);

const ViewCube = () => (
  <div className="absolute top-[7px] right-[11px] w-[92px] text-[13px] text-[#c4c8ca]">
    <div className="relative h-[98px]">
      <div className="absolute top-[6px] left-[5px] h-[84px] w-[84px] rounded-full border-[8px] border-[#444444]" />
      <button className="absolute top-0 left-[40px] leading-5">北</button>
      <button className="absolute top-[38px] left-px leading-5">西</button>
      <button className="absolute top-[38px] left-[79px] leading-5">东</button>
      <button className="absolute top-[77px] left-[40px] leading-5">南</button>
      <button className="absolute top-[30px] left-[29px] flex h-[36px] w-[36px] items-center justify-center border border-[#999] bg-[#cbcbcb]">
        <span className="h-[23px] w-[23px] bg-[#b1b2d4] text-[20px] leading-[21px] text-[#3c5148]">上</span>
      </button>
    </div>
    <button className="mt-[12px] ml-[23px] flex h-[16px] w-[45px] items-center justify-between rounded border border-[#84868c] bg-[#a9a9c8] px-[4px] text-[10px] text-[#555]">
      WCS
      <SmallCaret className="text-[#dcdcea]" />
    </button>
  </div>
);

const Arrow = ({ d, label, className }: { d: string; label: string; className: string }) => (
  <button aria-label={label} className={`flex shrink-0 items-center justify-center ${className}`}>
    <svg width="10" height="10" viewBox="0 0 10 10">
      <path d={d} fill="#444" />
    </svg>
  </button>
);

const LayoutTabs = () => (
  <div className="flex h-[16px] w-[795px] shrink-0 text-xs text-black">
    {["M2 1h1v8h-1zM9 1v8L5 5z", "M8 1v8L4 5z", "M2 1v8l4-4z", "M7 1h1v8h-1zM1 1v8l4-4z"].map((d) => (
      <Arrow key={d} d={d} label="切换布局" className="w-[14px] border-r border-[#bbb]" />
    ))}
    <button className="-ml-[3px] w-[45px] bg-[#212830] text-center leading-4 font-bold text-[#e4e6e8] [clip-path:polygon(0_0,100%_0,88%_100%,14%_100%)]">
      模型
    </button>
    {["布局1", "布局2"].map((tab) => (
      <div key={tab} className="flex">
        <button className="pr-[2px] pl-[2px] leading-4">{tab}</button>
        <svg width="8" height="16" viewBox="0 0 8 16" aria-hidden="true">
          <path d="M7.500 0L1 14" stroke="#333" />
        </svg>
      </div>
    ))}
  </div>
);

const Workspace = () => (
  <main className="mt-[4px] flex min-h-[510px] flex-1">
    <aside className="w-[24px] shrink-0 pr-px">
      <Grip className="h-2" />
      <ToolColumn names={drawTools} className="h-[412px]" />
    </aside>
    <section className="mb-px ml-[3px] flex min-w-0 flex-1 flex-col border-t-2 border-l border-[#a5a5a5] bg-[#e8e8e8]">
      <div className="flex min-h-0 flex-1">
        <div className="relative flex-1 overflow-hidden bg-[#212830]">
          <Drawing />
          <p className="absolute top-[3px] left-[5px] text-[11px] leading-4 text-[#dfe2e4]">[−][俯视][二维线框]</p>
          <ViewCube />
        </div>
        <div className="flex w-[17px] flex-col items-center">
          <Arrow d="M1 7h8L5 3z" label="上移" className="h-4" />
          <div className="flex flex-1 flex-col">
            <span className="grow-224" />
            <div className="h-[15px] w-[14px] border border-[#999] bg-linear-to-r from-[#f4f4f4] to-[#cfcfcf]" />
            <span className="grow-222" />
          </div>
          <Arrow d="M1 3h8L5 7z" label="下移" className="h-4" />
        </div>
      </div>
      <div className="flex h-[17px]">
        <LayoutTabs />
        <div className="my-[2px] w-[4px] border border-[#a9bcbc]" />
        <Arrow d="M7 1v8L3 5z" label="左移" className="w-[16px]" />
        <div className="flex flex-1 items-center">
          <span className="grow-168" />
          <div className="h-[12px] w-[14px] border border-[#999] bg-linear-to-b from-[#f4f4f4] to-[#cfcfcf]" />
          <span className="grow-192" />
        </div>
        <Arrow d="M3 1v8l4-4z" label="右移" className="mr-[17px] w-[16px]" />
      </div>
    </section>
    <aside className="relative ml-[5px] w-[26px] shrink-0 pr-[3px]">
      <Grip className="h-2" />
      <ToolColumn names={modifyTools} className="h-[370px]" />
      <Grip className="mt-[2px] h-2" />
      <ToolColumn names={["orderFront", "orderBack", "orderAbove", "orderUnder"]} className="h-[83px]" />
      <div className="h-[38px] overflow-hidden bg-[#ececec]">
        <div className="mx-[3px] mb-[3px] h-px bg-[#999]" />
        <ToolColumn names={["orderText", "orderHatch"]} className="h-[42px]" />
      </div>
    </aside>
  </main>
);

const CommandLine = () => (
  <section className="mt-[3px] mr-[20px] flex h-[54px] shrink-0">
    <div className="flex w-[21px] flex-col items-center bg-[#4c4c4c]">
      <Grip className="mt-[2px] h-[7px] w-[17px] border-0" />
      <button aria-label="关闭命令行" className="mt-[4px]">
        <svg width="14" height="14" viewBox="0 0 14 14">
          <path d="M3 3l8 8M11 3l-8 8" stroke="#f0f0f0" strokeWidth="2" />
        </svg>
      </button>
      <button aria-label="自定义" className="mt-[7px]">
        <svg width="15" height="15" viewBox="0 0 15 15">
          <path d="M5 5l7 7" stroke="#f2f2f2" strokeWidth="3" strokeLinecap="round" />
          <path d="M1 3l3 3 2-2-3-3c3-1 6 2 5 5L6 8C3 9 0 6 1 3z" fill="#f2f2f2" />
        </svg>
      </button>
    </div>
    <div className="flex flex-1 flex-col">
      <div className="h-[32px] border-b border-[#888] bg-[#c6c6c6] pt-[2px] pl-[3px] font-['Liberation_Mono','Noto_Sans_CJK_SC',monospace] text-xs leading-[14px] text-[#1c2440]">
        <p>指定基点或 [位移(D)] &lt;位移&gt;:</p>
        <p>指定第二个点或 &lt;使用第一个点作为位移&gt;:</p>
      </div>
      <div className="flex flex-1 items-center bg-[#f8f8f8] pl-[5px]">
        <svg width="14" height="13" viewBox="0 0 14 13" aria-hidden="true">
          <path d="M.5.5h13v12H.5z" fill="#dcebe2" stroke="#98aaa0" />
          <path d="M3 3.500l3 3-3 3M7 10h4" fill="none" stroke="#3c4a44" />
        </svg>
        <SmallCaret className="mx-[3px] text-[#666]" />
        <input
          aria-label="命令"
          placeholder="键入命令"
          className="ml-[4px] flex-1 text-xs placeholder:text-[#999]"
        />
      </div>
    </div>
  </section>
);

const toggles = [
  "infer", "snap", "grid", "ortho", "polar", "osnap", "osnap3d", "otrack",
  "ducs", "dyn", "lwt", "tpy", "qp", "sc", "am",
];

const StatusButton = ({ name, on, className = "" }: { name: string; on?: boolean; className?: string }) => (
  <button
    aria-label={name}
    className={`flex items-center justify-center border-r border-[#7a7a7a] ${
      on ? "bg-linear-to-b from-[#f4fafc] to-[#a5dcea]" : "bg-linear-to-b from-[#c6c6c6] to-[#a2a2a2]"
    } ${className}`}
  >
    <Ico>{icons[name]}</Ico>
  </button>
);

const StatusBar = () => (
  <footer className="flex h-[21px] shrink-0 border-t border-b border-t-[#1c1c1c] border-b-[#555] bg-linear-to-b from-[#9a9a9a] to-[#757575]">
    <output className="w-[203px] shrink-0 pl-[11px] font-['DejaVu_Sans_Mono',monospace] text-[9px] leading-[23px] text-black">
      4529.8727, 2781.5299, 0.0000
    </output>
    <div className="flex w-[310px] shrink-0">
      {toggles.map((name) => (
        <StatusButton key={name} name={name} on={name === "osnap" || name === "tpy"} className="min-w-0 flex-1" />
      ))}
    </div>
    <div className="flex flex-1 justify-end pr-px">
      <button className="w-[28px] border-r border-[#7a7a7a] bg-linear-to-b from-[#c6c6c6] to-[#a2a2a2] text-[11px] leading-[19px] text-black">
        模型
      </button>
      <StatusButton name="paper" className="w-[21px]" />
      <StatusButton name="layouts" className="w-[20px]" />
      <button className="ml-[18px] flex w-[49px] items-center justify-center border-r border-[#7a7a7a] bg-linear-to-b from-[#c6c6c6] to-[#a2a2a2] text-[11px] text-black">
        <Ico>{icons.annotate}</Ico>
        <span>1:1</span>
        <Caret className="ml-[3px]" />
      </button>
      <StatusButton name="annoVis" className="w-[21px]" />
      <StatusButton name="annoAuto" className="w-[21px]" />
      <StatusButton name="gear" className="ml-[6px] w-[21px]" />
      <StatusButton name="lockOpen" className="w-[21px]" />
      <StatusButton name="hardware" className="w-[21px]" />
      <StatusButton name="bulb" className="w-[25px] border border-[#666]" />
      <SmallCaret className="mx-[4px] self-center text-black" />
      <StatusButton name="clean" className="w-[21px]" />
    </div>
  </footer>
);

const StartOrb = () => (
  <svg width="34" height="34" viewBox="0 0 34 34" aria-hidden="true">
    <defs>
      <radialGradient id="orb" cx="50%" cy="85%" r="80%">
        <stop offset="0" stopColor="#4fc3e8" />
        <stop offset="0.5" stopColor="#245d94" />
        <stop offset="1" stopColor="#7d9cbb" />
      </radialGradient>
    </defs>
    <circle cx="17" cy="17" r="16" fill="url(#orb)" stroke="#27496b" />
    <path d="M9 10c3-2 5-2 8-.5l-2 7c-2-1-4-1-7 .5z" fill="#ea5b2c" />
    <path d="M18 10c3 1.500 5 1 8-.5l-2 7c-3 1.500-5 1.500-8 .5z" fill="#8cc63f" />
    <path d="M7.500 18c3-1.500 5-1.500 7-.5L12.500 25c-2-1.500-4-1.500-7 0z" fill="#3aa0dc" />
    <path d="M15.500 18c3 1.500 5 1 8-.5L21.500 25c-3 1.500-5 1.500-8 .5z" fill="#fbc52d" />
  </svg>
);

const Explorer = () => (
  <svg width="30" height="28" viewBox="0 0 30 28" fill="none" aria-hidden="true">
    <circle cx="15" cy="15" r="9.500" stroke="#2f8fcd" strokeWidth="6" />
    <circle cx="15" cy="15" r="9.500" stroke="#6cc4f2" strokeWidth="4" />
    <path d="M8 15.500h18" stroke="#4fb0e6" strokeWidth="4" />
    <path d="M19 18h10v4h-8z" fill="#a0bfd7" />
    <path d="M4 26C-2 22 10 2 26 2c3 1 1 5-1 7 1-3 0-4-2-4C13 6 3 19 4 26z" fill="#f3c73b" stroke="#c9952a" />
  </svg>
);

const Folder = () => (
  <svg width="32" height="28" viewBox="0 0 32 28" aria-hidden="true">
    <path d="M2 4l3-3h8l2 3h13v20H2z" fill="#e9c968" stroke="#c29a3a" />
    <path d="M5 3h6v4H5z" fill="#5fae58" />
    <path d="M12 4h6v3h-6z" fill="#fff" />
    <path d="M19 4h6v3h-6z" fill="#d96b4a" />
    <path d="M1 8h29v16H1z" fill="#f8e3a0" stroke="#d0ab4f" />
    <path d="M5 27v-8c0-2 1-3 3-3h15c2 0 3 1 3 3v8h-5v-6H10v6z" fill="#a9dbf3" stroke="#59a8d1" />
  </svg>
);

const AcadTile = () => (
  <svg width="30" height="28" viewBox="0 0 30 28" aria-hidden="true">
    <path d="M1 3h28v24H1z" fill="#181818" />
    <path d="M1 21l28-3v9H1z" fill="#c4161c" />
    <path d="M20 5l7 1M21 9l6 3M19 13l8-2M22 4l3 12M26 5l-4 9" stroke="#888" />
    <path d="M4 17L9 1h6l6 15-5 2-2-4-4 1-1 4zM11 10l2-.5-1.500-4z" fill="#f0f0f0" fillRule="evenodd" />
  </svg>
);

// Notification area glyphs
const tray: { label: string; art: React.ReactNode }[] = [
  {
    label: "输入法",
    art: (
      <>
        <path d="M1.500 6.500h15v8h-15z" fill="#d8d8d8" stroke="#666" />
        <path d="M3 9h12M3 11h12" stroke="#777" strokeDasharray="1 1" />
        <path d="M9 6V3" stroke="#666" />
      </>
    ),
  },
  {
    label: "音频",
    art: (
      <>
        <path d="M3 4h13v11H3z" fill="#23e13c" stroke="none" />
        <path d="M1 9h2l1-3 2 7 2-10 2 11 2-8 2 5 2-3h2" stroke="#172a8c" strokeWidth="1.500" />
        <path d="M6 5v7M11 6v7" stroke="#c0266b" />
      </>
    ),
  },
  {
    label: "安全",
    art: (
      <>
        <path d="M9 1.500c2 1.500 4 2 7 2 0 6-1 10-7 13-6-3-7-7-7-13 3 0 5-.5 7-2z" fill="#fff" stroke="#2b6fd0" strokeWidth="1.500" />
        <path d="M4.500 6h9L9 13z" fill="#3b8df0" stroke="none" />
        <path d="M6 7l3 3 3-3" stroke="#fff" strokeWidth="1.500" />
      </>
    ),
  },
  {
    label: "PDF",
    art: (
      <>
        <path d="M2.500 2.500h13v13h-13z" fill="#c3161c" stroke="#7a0d10" />
        <path d="M4 14c4-3 5-7 4-10 1 5 3 6 6 6-3 0-6 1-8 2" stroke="#fff" />
      </>
    ),
  },
  {
    label: "网络",
    art: <path d="M2 13h2v2H2zM5 11h2v4H5zM8 9h2v6H8zM11 6h2v9h-2zM14 3h2v12h-2z" fill="#fff" stroke="#5a6478" strokeWidth="0.5" />,
  },
  {
    label: "蓝牙",
    art: (
      <>
        <ellipse cx="9" cy="9" rx="6" ry="7.500" fill="#103f78" stroke="#0b2c55" />
        <path d="M6 6l6 6-3 2.500v-11L12 6l-6 6" stroke="#fff" strokeWidth="1.500" />
      </>
    ),
  },
  {
    label: "电源",
    art: (
      <>
        <path d="M3.500 3.500h8v12h-8z" fill="#b9c1cd" stroke="#fff" />
        <path d="M10 3v3M14 3v3M9 6h6v4l-2 2h-2l-2-2zM12 12v4" fill="#fff" stroke="#444" />
      </>
    ),
  },
  {
    label: "音量",
    art: (
      <>
        <path d="M2.500 6.500h3l4-4v13l-4-4h-3z" fill="#fff" stroke="#555" />
        <path d="M11.500 6c1.500 2 1.500 4 0 6M14 4c2.500 3 2.500 7 0 10" stroke="#fff" />
      </>
    ),
  },
];

const Taskbar = () => (
  <div className="flex h-[37px] shrink-0 border-t border-[#bcd3e4] bg-[#a0bfd7]">
    <div className="flex items-center bg-linear-to-r from-[#8296b4] from-25% to-[#a0bfd7] to-70%">
      <button aria-label="开始" className="flex w-[56px] pl-[8px]">
        <StartOrb />
      </button>
      <button aria-label="Internet Explorer" className="flex w-[58px] justify-center">
        <Explorer />
      </button>
      <button aria-label="资源管理器" className="flex w-[58px] justify-center">
        <Folder />
      </button>
    </div>
    <button
      aria-label="AutoCAD 2013"
      className="flex w-[56px] items-center justify-center rounded-sm border border-[#5f7388] bg-linear-to-r from-[#f2ecf4] via-[#d7e8f6] to-[#f0eaf2]"
    >
      <AcadTile />
    </button>
    <div className="flex flex-1 justify-end">
      <span className="w-[7px] bg-[#9a9fc4]" />
      <span className="w-[5px] bg-[#86a5cf]" />
      <div className="flex items-center bg-[#8093b1] pl-[17px]">
        <button aria-label={tray[0].label} className="mr-[2px] w-[26px]">
          <Ico>{tray[0].art}</Ico>
        </button>
        <div className="flex w-[157px]">
          {tray.slice(1).map((item) => (
            <button key={item.label} aria-label={item.label} className="flex flex-1 justify-center">
              <Ico>{item.art}</Ico>
            </button>
          ))}
        </div>
        <div className="mr-[11px] ml-[40px] text-center text-xs leading-4 text-white">
          <p>11:59</p>
          <p>2017-11-19</p>
        </div>
        <button
          aria-label="显示桌面"
          className="mr-[1px] h-full w-[12px] border border-[#b9c4d6] bg-linear-to-b from-[#5b7a78] via-[#4c4b7c] to-[#6d8c86]"
        />
      </div>
    </div>
  </div>
);

export default function App() {
  return (
    <div className="flex min-h-screen flex-col overflow-hidden bg-[#666666] font-['Open_Sans','Noto_Sans_CJK_SC',sans-serif]">
      <Header />
      <StandardBar />
      <PropertyBar />
      <Workspace />
      <CommandLine />
      <StatusBar />
      <Taskbar />
    </div>
  );
}
